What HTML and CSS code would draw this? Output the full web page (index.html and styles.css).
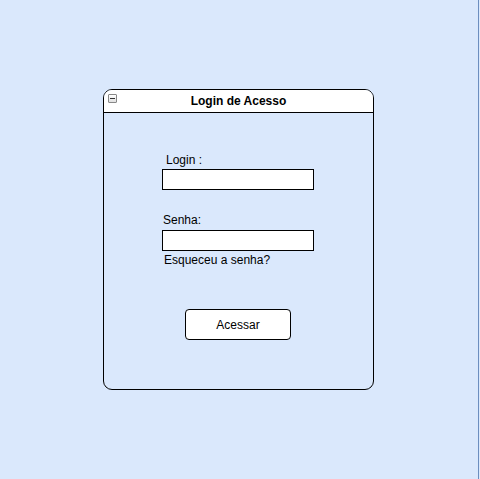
FILE: index.html
```html
<!DOCTYPE html>
<html lang="pt">
<head>
<meta charset="utf-8">
<link rel="stylesheet" href="styles.css">
</head>
<body>
<div class="canvas">
  <div class="window">
    <div class="header">
      <span class="collapse"><span class="minus"></span></span>
      <span class="title">Login de Acesso</span>
    </div>
    <div class="content">
      <div class="label label-login">Login :</div>
      <div class="input"></div>
      <div class="label label-senha">Senha:</div>
      <div class="input"></div>
      <div class="label label-forgot">Esqueceu a senha?</div>
      <div class="button">Acessar</div>
    </div>
  </div>
</div>
</body>
</html>
```
FILE: styles.css
```css
html, body {
  margin: 0;
  padding: 0;
  background: #dae8fc;
}
body {
  width: 480px;
  height: 479px;
  overflow: hidden;
  font-family: "Liberation Sans", Arial, sans-serif;
  font-size: 12px;
  color: #000;
}
.canvas {
  box-sizing: border-box;
  width: 479px;
  height: 479px;
  padding-top: 89px;
  padding-left: 103px;
  border-right: 1px solid #6c8ebf;
}
.window {
  box-sizing: border-box;
  width: 271px;
  height: 301px;
  border: 1px solid #000;
  border-radius: 9px;
}
.header {
  position: relative;
  height: 22px;
  border-bottom: 1px solid #000;
  background: #fff;
  border-radius: 8px 8px 0 0;
  display: flex;
  align-items: center;
  justify-content: center;
}
.title {
  font-weight: bold;
  font-size: 12px;
}
.collapse {
  position: absolute;
  left: 4px;
  top: 4px;
  width: 7px;
  height: 7px;
  border: 1px solid #888;
  border-radius: 1px;
  background: linear-gradient(#fff, #e0e0e0);
  display: flex;
  align-items: center;
  justify-content: center;
}
.minus {
  width: 5px;
  height: 1px;
  background: #333;
}
.content {
  display: flex;
  flex-direction: column;
  align-items: flex-start;
  padding-left: 58px;
}
.label {
  line-height: 14px;
}
.label-login {
  margin-top: 40px;
  margin-left: 4px;
  margin-bottom: 2px;
}
.label-senha {
  margin-top: 23px;
  margin-left: 1px;
  margin-bottom: 3px;
}
.label-forgot {
  margin-top: 2px;
  margin-left: 2px;
}
.input {
  box-sizing: border-box;
  width: 152px;
  height: 21px;
  border: 1px solid #000;
  background: #fff;
}
.button {
  box-sizing: border-box;
  margin-top: 42px;
  margin-left: 23px;
  width: 106px;
  height: 31px;
  border: 1px solid #000;
  border-radius: 4px;
  background: #fff;
  display: flex;
  align-items: center;
  justify-content: center;
}
```
